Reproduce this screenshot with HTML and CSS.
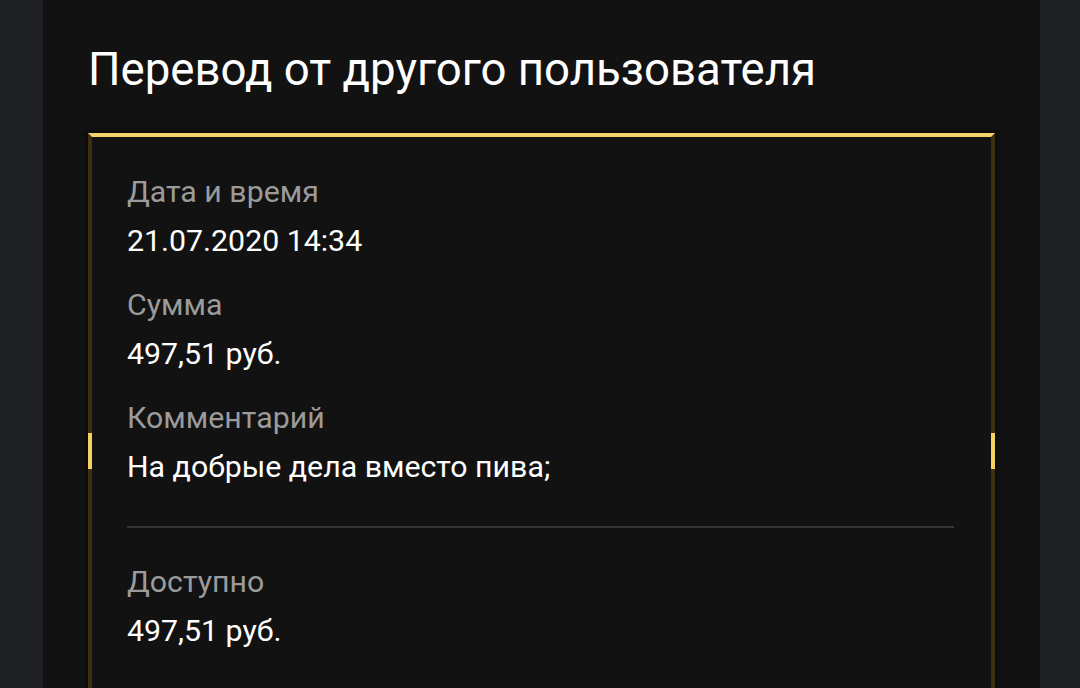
FILE: index.html
```html
<html>
<head>
    <meta http-equiv="Content-Type" content="text/html; charset=UTF-8" />
    <title>Перевод от другого пользователя</title>
    <link rel="stylesheet" href="styles.css">
</head>
<body>

<div class="panel">
    <h1 class="title">Перевод от другого пользователя</h1>

    <div class="card">
        <div class="field">
            <div class="label">Дата и время</div>
            <div class="value">21.07.2020 14:34</div>
        </div>
        <div class="field">
            <div class="label">Сумма</div>
            <div class="value">497,51 руб.</div>
        </div>
        <div class="field">
            <div class="label">Комментарий</div>
            <div class="value">На добрые дела вместо пива;</div>
        </div>

        <div class="divider"></div>

        <div class="field">
            <div class="label">Доступно</div>
            <div class="value">497,51 руб.</div>
        </div>
    </div>
</div>

</body>
</html>
```

FILE: styles.css
```css
        html, body {
            margin: 0;
            height: 100%;
        }
        body {
            background: #1f2023;
            font-family: Roboto, "Noto Sans", sans-serif;
            color: #fff;
            overflow: hidden;
        }

        .panel {
            margin: 0 40px 0 43px;
            min-height: 100%;
            background: #121212;
            padding: 43px 45px 0 45px;
            box-sizing: border-box;
        }

        .title {
            margin: 0;
            font-size: 45.6px;
            line-height: 54px;
            font-weight: 400;
            color: #fff;
        }

        /* Card with the gold frame */
        .card {
            position: relative;
            margin-top: 36px;
            border-left: 4px solid #3b2f0f;
            border-right: 4px solid #3b2f0f;
            border-top: 4px solid #f3d46c;
            padding: 37px 37px 60px 35px;
            box-shadow: 0 0 6px #000;
        }
        .card:before,
        .card:after {
            content: "";
            position: absolute;
            top: 296px;
            width: 4px;
            height: 36px;
            background: #f5d25c;
        }
        .card:before {
            left: -4px;
        }
        .card:after {
            right: -4px;
        }

        .field {
            margin-bottom: 28px;
        }
        .label {
            font-size: 30.3px;
            line-height: 36px;
            color: #9b9b9b;
        }
        .value {
            margin-top: 13px;
            font-size: 30.3px;
            line-height: 36px;
            color: #fff;
        }

        .divider {
            height: 2px;
            background: #353535;
            margin: 41px 0 36px 0;
        }
```
